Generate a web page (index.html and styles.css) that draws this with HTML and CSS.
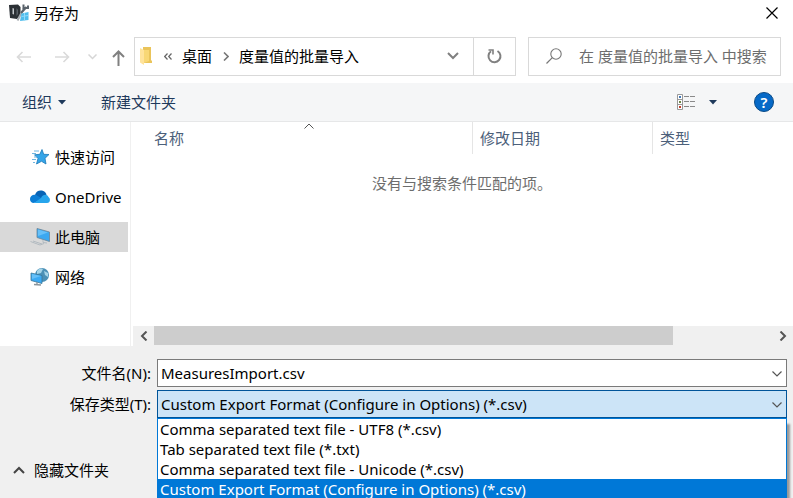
FILE: index.html
```html
<!DOCTYPE html>
<html lang="zh-CN">
<head>
<meta charset="utf-8">
<title>另存为</title>
<link rel="stylesheet" href="styles.css">
</head>
<body>
<div class="dialog">
  <header class="titlebar">
    <svg class="app-icon" width="20" height="18" viewBox="0 0 20 18" aria-hidden="true">
      <path d="M0 1L9 0.500L11.500 3V11L8 15L1 14Z" fill="#2b3035"/>
      <path d="M3.500 4L5 4.500V10.500L3.500 10Z" fill="#c4c9cd"/>
      <path d="M7.500 4L9 6V10L7.500 12Z" fill="#596067"/>
      <path d="M8.500 16.500L15 4" stroke="#a7adb2" stroke-width="2"/>
      <path d="M12 9L17.500 3M14.500 0.500V4H19V1.500" stroke="#59626a" stroke-width="2" fill="none"/>
      <path d="M12.500 9.500L19.500 8V16L11 17Z" fill="#4fbdec"/>
      <path d="M12.500 12.500L19 11.500M15.500 9V16.500" stroke="#91dafa" stroke-width="1"/>
    </svg>
    <h1 class="title">另存为</h1>
    <button class="close" type="button" aria-label="关闭">
      <svg width="12" height="12" viewBox="0 0 12 12"><path d="M0.500 0.500L11.500 11.500M11.500 0.500L0.500 11.500" stroke="#000" stroke-width="1.200"/></svg>
    </button>
  </header>

  <nav class="navrow">
    <div class="history">
      <button class="plain" type="button" aria-label="后退" disabled><svg width="15" height="12" viewBox="0 0 15 12"><path d="M15 6H1.500M6.500 1L1.500 6L6.500 11" fill="none" stroke="#dadada" stroke-width="1.600"/></svg></button>
      <button class="plain" type="button" aria-label="前进" disabled><svg width="15" height="12" viewBox="0 0 15 12"><path d="M0 6H13.500M8.500 1L13.500 6L8.500 11" fill="none" stroke="#dadada" stroke-width="1.600"/></svg></button>
      <button class="plain" type="button" aria-label="最近位置" disabled><svg width="9" height="6" viewBox="0 0 9 6"><path d="M0.500 0.500L4.500 4.500L8.500 0.500" fill="none" stroke="#d6d6d6" stroke-width="1.500"/></svg></button>
      <button class="plain up" type="button" aria-label="上移"><svg width="13" height="16" viewBox="0 0 13 16"><path d="M6.500 16V2M1 7L6.500 1.500L12 7" fill="none" stroke="#808080" stroke-width="2"/></svg></button>
    </div>
    <div class="address">
      <svg width="12" height="18" viewBox="0 0 12 18" aria-hidden="true"><path d="M3 0H11V13L12 14V16H3Z" fill="#eac45a"/><path d="M0 1L4 3V18L0 15.500Z" fill="#ffe39b"/><path d="M4 3H9V14L4 16Z" fill="#f8d775"/></svg>
      <svg class="more" width="8" height="7" viewBox="0 0 8 7" aria-hidden="true"><path d="M3.500 0.500L0.700 3.500L3.500 6.500M7.500 0.500L4.700 3.500L7.500 6.500" fill="none" stroke="#666" stroke-width="1.200"/></svg>
      <a class="crumb" href="#desktop">桌面</a>
      <svg width="6" height="9" viewBox="0 0 6 9" aria-hidden="true"><path d="M1 0.500L5 4.500L1 8.500" fill="none" stroke="#777" stroke-width="1.600"/></svg>
      <a class="crumb" href="#import">度量值的批量导入</a>
      <button class="plain history-drop" type="button" aria-label="以前的位置"><svg width="12" height="8" viewBox="0 0 12 8"><path d="M1 1L6 6L11 1" fill="none" stroke="#808080" stroke-width="2"/></svg></button>
      <button class="plain refresh" type="button" aria-label="刷新"><svg width="15" height="15" viewBox="0 0 15 15"><path d="M10.500 2A6 6 0 1 1 4 2.300" fill="none" stroke="#808080" stroke-width="2"/><path d="M1.500 1H6V5.500" fill="none" stroke="#808080" stroke-width="1.600"/></svg></button>
    </div>
    <div class="search">
      <svg width="16" height="16" viewBox="0 0 16 16" aria-hidden="true"><circle cx="10" cy="6" r="5.200" fill="none" stroke="#777" stroke-width="1.100"/><path d="M6.300 9.700L0.500 15.500" stroke="#777" stroke-width="1.200"/></svg>
      <input class="search-input" type="text" aria-label="搜索" placeholder="在 度量值的批量导入 中搜索">
    </div>
  </nav>

  <div class="toolbar">
    <button class="tool" type="button">组织<svg width="8" height="5" viewBox="0 0 8 5"><path d="M0 0H8L4 4.500Z" fill="#1e395b"/></svg></button>
    <button class="tool" type="button">新建文件夹</button>
    <button class="tool view" type="button" aria-label="更改视图">
      <svg width="18" height="16" viewBox="0 0 18 16"><path d="M0.500 0.500H5.500V15.500H0.500ZM0.500 5.500H5.500M0.500 10.500H5.500" fill="#fff" stroke="#999"/><path d="M2 2H4V4H2Z" fill="#3f77b8"/><path d="M2 7H4V9H2Z" fill="#6c8544"/><path d="M2 12H4V14H2Z" fill="#c33b27"/><path d="M7 2.500H12M13 2.500H18M7 7.500H12M13 7.500H18M7 12.500H12M13 12.500H18" stroke="#8a8a8a"/></svg>
      <svg width="8" height="5" viewBox="0 0 8 5"><path d="M0 0H8L4 4.500Z" fill="#1e395b"/></svg>
    </button>
    <button class="help" type="button" aria-label="帮助">?</button>
  </div>

  <main class="browser">
    <nav class="sidebar">
      <a class="place" href="#quick"><svg width="20" height="16" viewBox="0 0 20 16"><path d="M12 0.500L13.700 5.300L19 5.500L15 9.300L16 15L11.500 12.300L6.500 15L8 9.500L4.500 5.800L9.800 5.300Z" fill="#35a5e8" stroke="#1c79b8" stroke-width="0.800"/><path d="M4 2H9M2 4.500H6M4 8H7M2 10.500H6M3 13.500H5" stroke="#6fb5e0" stroke-width="1"/></svg>快速访问</a>
      <a class="place" href="#onedrive"><svg width="20" height="14" viewBox="0 0 20 14"><path d="M5 5C6 1 9 0 12 0.500C15 1 16 3 16.500 5L11 9Z" fill="#0763b5"/><path d="M4 13C1 13 0 11 0 9C0 6 3 4 6 5L13 9Z" fill="#0b7dd5"/><path d="M11 8C13 4 17 4 18.500 7C21 9 20 13 17 13H4Z" fill="#27a5ec"/></svg>OneDrive</a>
      <a class="place selected" href="#pc"><svg width="20" height="18" viewBox="0 0 20 18"><path d="M7 0.500L19.500 4V13.500L7 9.500Z" fill="#3ba8f0" stroke="#6b8496" stroke-width="0.800"/><path d="M8 1.500L18 4.500L8 8Z" fill="#66c0f8"/><path d="M13 12V14.500L17 15M0.500 13.500L10 17L14 15.500M3 13L12 16" stroke="#b2bac0" stroke-width="1" fill="none"/></svg>此电脑</a>
      <a class="place" href="#network"><svg width="20" height="18" viewBox="0 0 20 18"><circle cx="12" cy="7" r="7" fill="#4b90b6"/><path d="M7 3C9 0 12 0 13 1L11 5L7 6ZM14 3L18 5V9L15 7Z" fill="#a5d4e8"/><path d="M1 5L12 7.500V15.500L1 12.500Z" fill="#3baaf4" stroke="#397596" stroke-width="0.800"/><path d="M2 6L11 8L2 11Z" fill="#66c0f8"/><path d="M7 14V16M4 16.500L11 17" stroke="#8a949b" stroke-width="1.300"/></svg>网络</a>
    </nav>
    <section class="files">
      <svg class="sort" width="10" height="6" viewBox="0 0 10 6" aria-hidden="true"><path d="M0.500 5.500L5 1L9.500 5.500" fill="none" stroke="#555"/></svg>
      <table class="list">
        <colgroup><col class="col-name"><col class="col-date"><col></colgroup>
        <thead><tr><th>名称</th><th>修改日期</th><th>类型</th></tr></thead>
        <tbody><tr><td colspan="3">没有与搜索条件匹配的项。</td></tr></tbody>
      </table>
      <div class="scrollbar">
        <button class="plain arrow" type="button" aria-label="向左滚动"><svg width="8" height="10" viewBox="0 0 8 10"><path d="M6.500 0.500L2 5L6.500 9.500" fill="none" stroke="#555" stroke-width="2"/></svg></button>
        <div class="track"><div class="thumb"></div></div>
        <button class="plain arrow" type="button" aria-label="向右滚动"><svg width="8" height="10" viewBox="0 0 8 10"><path d="M1.500 0.500L6 5L1.500 9.500" fill="none" stroke="#555" stroke-width="2"/></svg></button>
      </div>
    </section>
  </main>

  <form class="fields">
    <label class="label" for="filename">文件名(N):</label>
    <div class="combo">
      <input class="control" id="filename" type="text" value="MeasuresImport.csv">
      <svg class="chevron" width="10" height="6" viewBox="0 0 10 6" aria-hidden="true"><path d="M0.500 0.500L5 5L9.500 0.500" fill="none" stroke="#555" stroke-width="1.200"/></svg>
    </div>
    <label class="label" for="filetype">保存类型(T):</label>
    <div class="combo">
      <select class="control open" id="filetype"><option>Custom Export Format (Configure in Options) (*.csv)</option></select>
      <svg class="chevron" width="10" height="6" viewBox="0 0 10 6" aria-hidden="true"><path d="M0.500 0.500L5 5L9.500 0.500" fill="none" stroke="#555" stroke-width="1.200"/></svg>
      <ul class="menu" role="listbox" aria-label="保存类型">
        <li role="option">Comma separated text file - UTF8 (*.csv)</li>
        <li role="option">Tab separated text file (*.txt)</li>
        <li role="option">Comma separated text file - Unicode (*.csv)</li>
        <li role="option" class="active" aria-selected="true">Custom Export Format (Configure in Options) (*.csv)</li>
      </ul>
    </div>
  </form>
  <footer class="footer">
    <button class="plain hide" type="button"><svg width="12" height="8" viewBox="0 0 12 8"><path d="M1 7L6 2L11 7" fill="none" stroke="#444" stroke-width="2"/></svg>隐藏文件夹</button>
  </footer>
</div>
</body>
</html>
```
FILE: styles.css
```css
* { box-sizing: border-box; }

body, button, input, select {
  font: 15px/20px "Noto Sans", "Noto Sans CJK SC", sans-serif;
  color: #000;
}

body { margin: 0; }
svg { display: block; flex: none; }
a { color: inherit; text-decoration: none; }

.dialog {
  min-height: 100vh;
  overflow: hidden;
  background: #f0f0f0;
}

button {
  display: flex;
  align-items: center;
  padding: 0;
  border: 0;
  background: none;
}

.titlebar {
  display: flex;
  align-items: center;
  height: 26px;
  padding: 0 15px 0 9px;
  background: #fff;
}
.title { margin: 0 auto 0 5px; font-size: 15px; font-weight: 400; }

.navrow {
  display: flex;
  align-items: center;
  padding: 11px 12px 7px 16px;
  background: #fff;
}
.history { display: flex; align-items: center; width: 118px; }
.history .plain { margin-right: 18px; }
.history .plain:first-child { margin-right: 24px; }
.history .plain:nth-child(3) { margin-right: 15px; }
.history .plain.up { margin-right: 0; }
.up { padding-top: 2px; }

.address {
  flex: 1;
  display: flex;
  align-items: center;
  height: 39px;
  padding: 0 0 1px 5px;
  border: 1px solid #d9d9d9;
}
.more { margin: 0 10px 0 12px; }
.crumb { margin-right: 11px; }
.crumb + .crumb, svg + .crumb:not(:first-of-type) { margin-left: 10px; }
.history-drop { margin-left: auto; padding: 0 14px; }
.refresh {
  align-self: stretch;
  justify-content: center;
  width: 42px;
  margin-bottom: -1px;
  border-left: 1px solid #d9d9d9;
}

.search {
  display: flex;
  align-items: center;
  gap: 17px;
  width: 253px;
  height: 39px;
  margin-left: 12px;
  padding: 0 0 1px 17px;
  border: 1px solid #d9d9d9;
}
.search-input { flex: 1; min-width: 0; padding: 0; border: 0; background: none; }
.search-input::placeholder { color: #6d6d6d; opacity: 1; }

.toolbar {
  display: flex;
  align-items: center;
  height: 39px;
  padding: 0 19px 0 22px;
  background: #f5f6f7;
  border-bottom: 1px solid #e6e7e8;
}
.tool { gap: 6px; margin-right: 35px; color: #1e395b; }
.view { gap: 14px; margin-left: auto; margin-right: 37px; }
.help {
  justify-content: center;
  width: 20px;
  height: 20px;
  border: 1px solid #0a4a86;
  border-radius: 50%;
  background: #0669c7;
  color: #fff;
  font-weight: 600;
}

.browser { display: flex; height: 224px; background: #fff; }
.sidebar {
  display: flex;
  flex-direction: column;
  gap: 10px;
  width: 131px;
  padding: 20px 2px 0 0;
  border-right: 1px solid #f0f0f0;
}
.place {
  display: flex;
  align-items: center;
  gap: 5px;
  height: 30px;
  padding-left: 30px;
  white-space: nowrap;
}
.selected { background: #d9d9d9; }

.files {
  position: relative;
  flex: 1;
  display: flex;
  flex-direction: column;
}
.sort { position: absolute; left: 173px; top: 1px; }
.list { width: 100%; table-layout: fixed; border-collapse: separate; border-spacing: 0; }
.col-name { width: 342px; }
.col-date { width: 180px; }
th {
  height: 32px;
  padding: 0 7px;
  border-right: 1px solid #e5e5e5;
  color: #4c607a;
  font-weight: 400;
  text-align: left;
}
th:first-child { padding-left: 23px; }
th:last-child { border-right: 0; }
td { padding: 19px 0; color: #6d6d6d; text-align: center; }

.scrollbar {
  display: flex;
  height: 20px;
  margin-top: auto;
  margin-left: 2px;
  background: #f0f0f0;
}
.arrow { justify-content: center; width: 21px; }
.track { flex: 1; }
.thumb { width: 84%; height: 19px; background: #cdcdcd; }

.fields {
  display: grid;
  grid-template-columns: 151px 1fr;
  gap: 3px 6px;
  align-items: center;
  padding: 13px 6px 0 0;
}
.label { text-align: right; }
.combo { position: relative; }
.control {
  display: block;
  width: 100%;
  height: 28px;
  padding: 0 24px 0 3px;
  border: 1px solid #7a7a7a;
  border-radius: 0;
  background: #fff;
  appearance: none;
  outline: 0;
}
.control.open { border-color: #005499; background: #cce4f7; }
.chevron { position: absolute; right: 5px; top: 12px; pointer-events: none; }

.menu {
  position: absolute;
  top: 28px;
  left: 0;
  right: 0;
  margin: 0;
  padding: 0;
  border: 1px solid #0078d7;
  background: #fff;
  box-shadow: 3px 6px 2px #999;
  list-style: none;
}
.menu li { height: 20px; padding-left: 2px; white-space: nowrap; }
.menu .active { background: #0078d7; color: #fff; }

.footer { padding: 42px 13px 0; }
.hide { gap: 9px; }
```
